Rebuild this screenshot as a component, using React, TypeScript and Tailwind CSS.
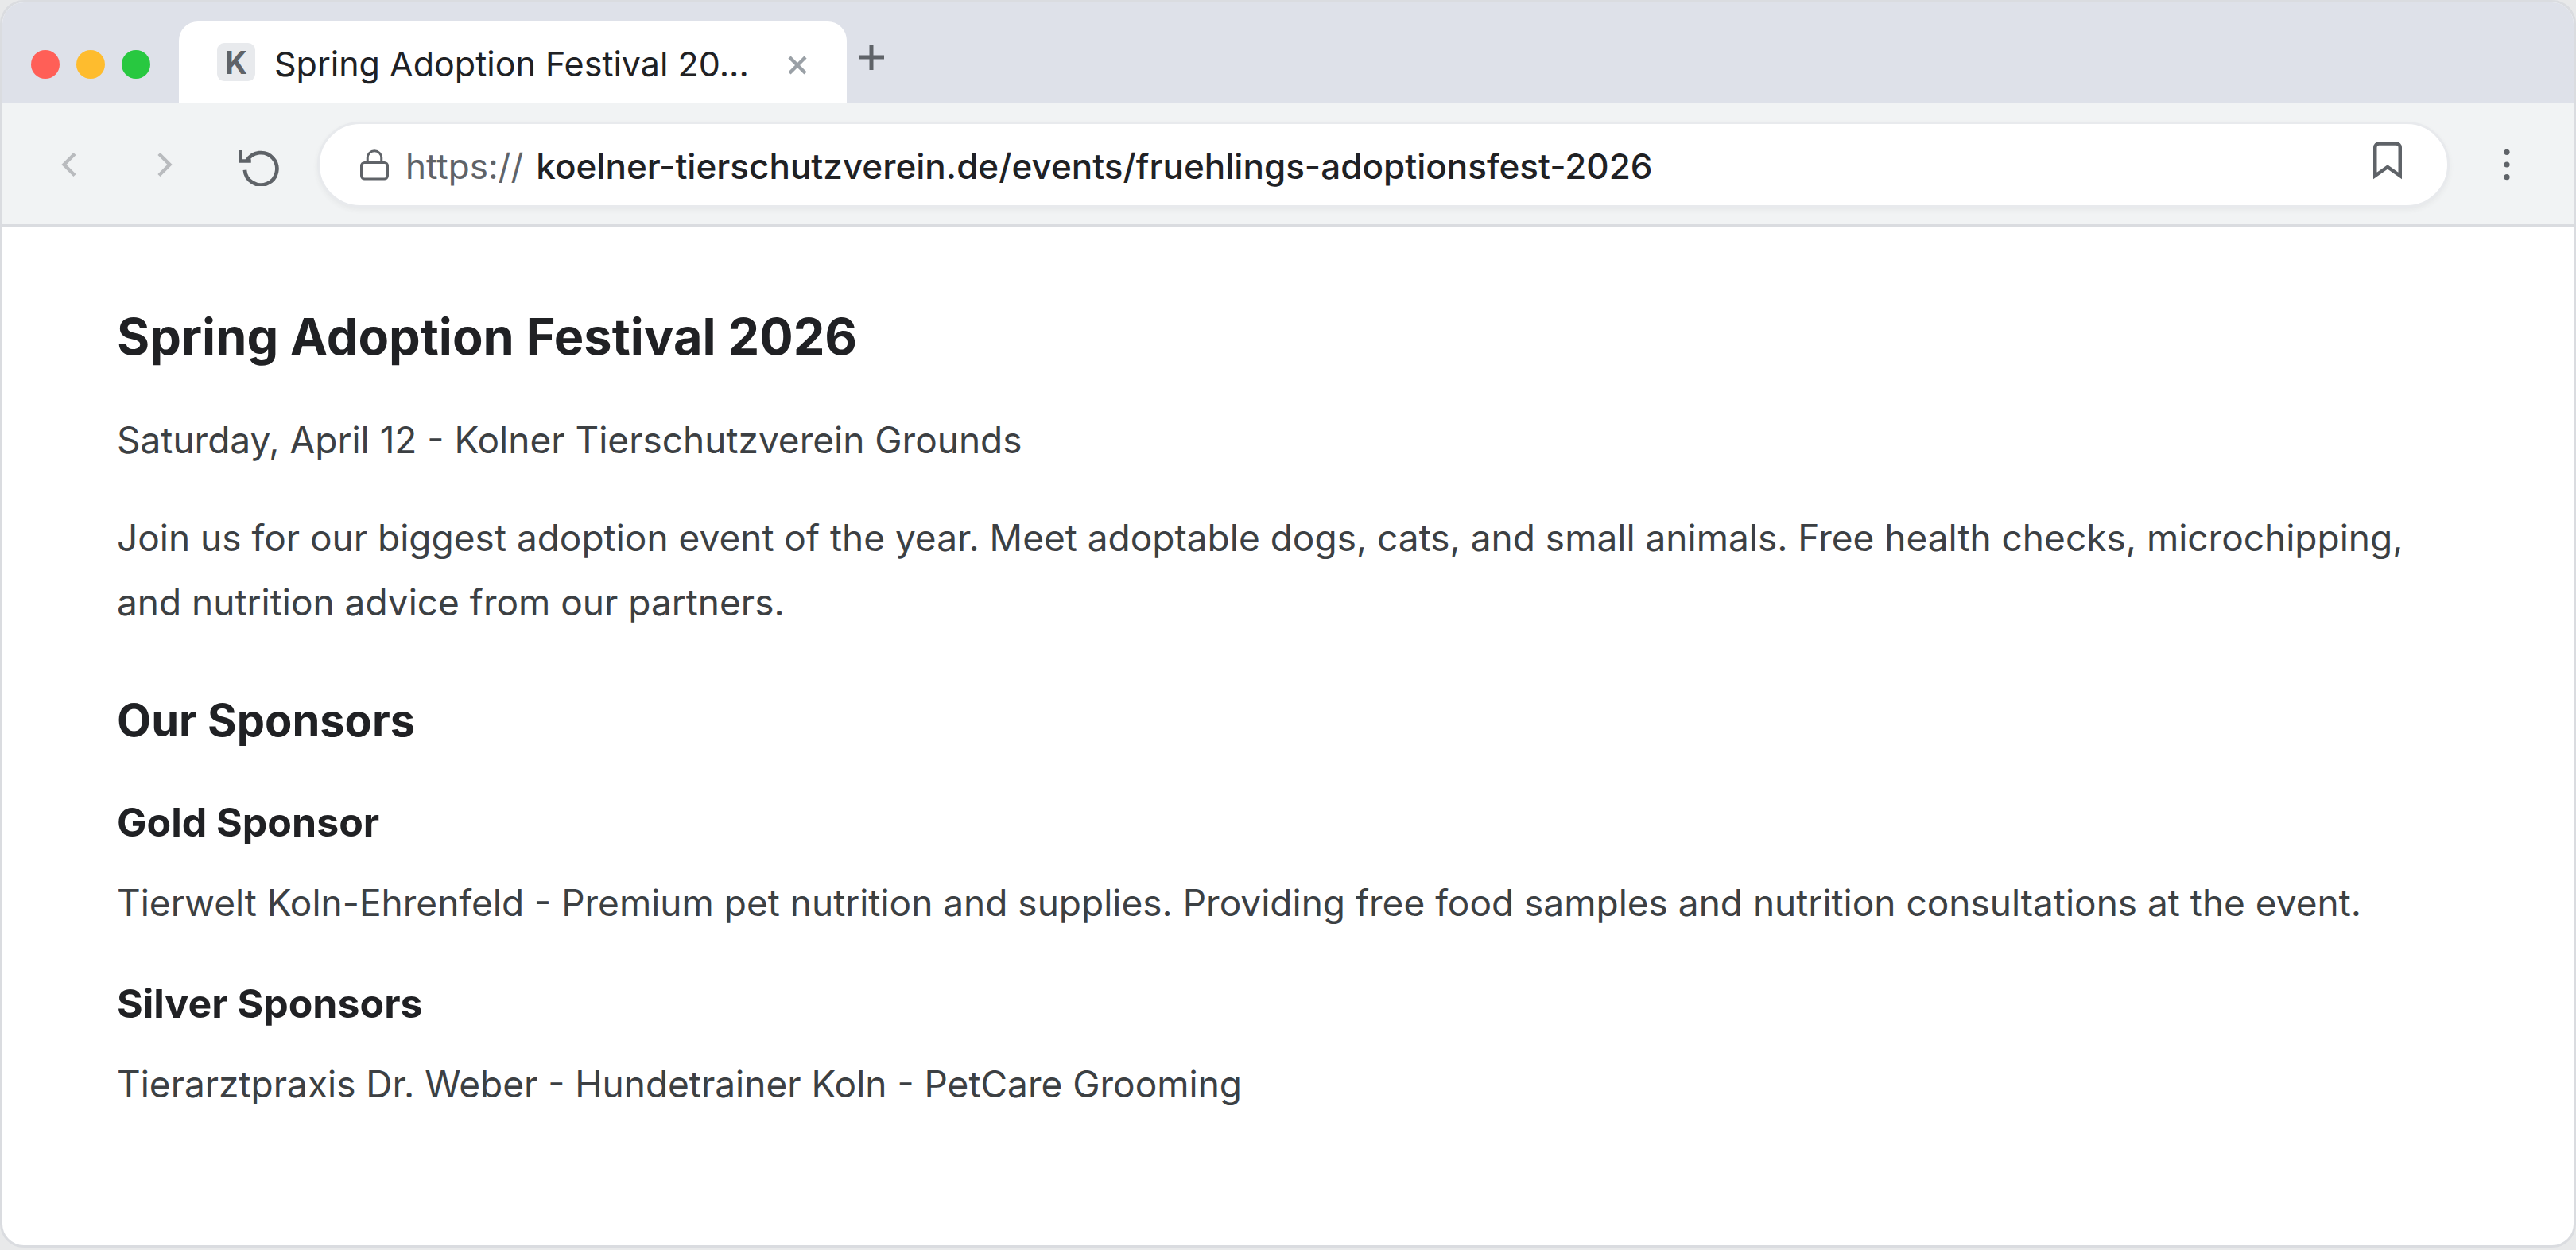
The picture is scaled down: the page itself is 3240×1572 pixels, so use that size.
import type { ReactNode } from "react";

function NavButton({ label, disabled = false, children }: { label: string; disabled?: boolean; children: ReactNode }) {
  return (
    <button
      type="button"
      aria-label={label}
      disabled={disabled}
      className="flex size-24 shrink-0 items-center justify-center rounded-full text-[#5f6368] disabled:text-[#b9bbbe]"
    >
      {children}
    </button>
  );
}

function BackIcon() {
  return (
    <svg className="size-12" viewBox="0 0 48 48" fill="none" stroke="currentColor" strokeWidth="4.5">
      <path d="M31 10.500 17.500 24 31 37.500" />
    </svg>
  );
}

function ForwardIcon() {
  return (
    <svg className="size-12" viewBox="0 0 48 48" fill="none" stroke="currentColor" strokeWidth="4.5">
      <path d="M17 10.500 30.500 24 17 37.500" />
    </svg>
  );
}

function ReloadIcon() {
  return (
    <svg className="size-[54px]" viewBox="0 0 24 24" fill="none" stroke="currentColor" strokeWidth="2.1">
      <path d="M3.510 15a9 9 0 1 0 1.100-5" />
      <path d="M1 4v6h6" />
    </svg>
  );
}

function LockIcon() {
  return (
    <svg className="h-10 w-9 shrink-0 text-[#5f6368]" viewBox="0 0 36 40" fill="none" stroke="currentColor" strokeWidth="3">
      <rect x="1.500" y="17.500" width="33" height="20.500" rx="4" />
      <path d="M9.250 17.500v-6a8.750 8.750 0 0 1 17.500 0v6" />
    </svg>
  );
}

function BookmarkIcon() {
  return (
    <svg className="h-12 w-9" viewBox="0 0 36 48" fill="none" stroke="currentColor" strokeWidth="4.500">
      <path d="M2.250 43V7.500a5 5 0 0 1 5-5h21.500a5 5 0 0 1 5 5V43L18 32z" />
    </svg>
  );
}

function MenuIcon() {
  return (
    <svg className="size-12" viewBox="0 0 48 48" fill="currentColor">
      <circle cx="24" cy="8.300" r="3.600" />
      <circle cx="24" cy="24" r="3.600" />
      <circle cx="24" cy="39.700" r="3.600" />
    </svg>
  );
}

function TabStrip() {
  return (
    <div className="flex items-end bg-[#dee1e9] pt-6 pl-9">
      <div className="flex h-[102px] items-center gap-[21px] pt-1.5 pr-9">
        <button type="button" aria-label="Close window" className="size-9 rounded-full bg-[#ff5f57]" />
        <button type="button" aria-label="Minimize window" className="size-9 rounded-full bg-[#febc2e]" />
        <button type="button" aria-label="Zoom window" className="size-9 rounded-full bg-[#28c840]" />
      </div>
      <div className="flex h-[102px] w-[840px] items-center rounded-t-3xl bg-white pr-[50px] pl-12">
        <span className="flex size-12 shrink-0 items-center justify-center rounded-[9px] bg-[#e8eaed] text-[39px] leading-none font-bold text-[#5f6368]">
          K
        </span>
        <span className="ml-6 min-w-0 flex-1 truncate pt-1 text-[43px] leading-[60px] text-[#202124]">
          Spring Adoption Festival 20...
        </span>
        <button type="button" aria-label="Close tab" className="flex shrink-0 items-center pt-2 text-[#9aa0a6]">
          <svg className="size-6" viewBox="0 0 24 24" fill="none" stroke="currentColor" strokeWidth="4.500">
            <path d="m2 2 20 20m0-20L2 22" />
          </svg>
        </button>
      </div>
      <button type="button" aria-label="New tab" className="flex h-[102px] w-[62px] items-center justify-center pb-3 text-[#5f6368]">
        <svg className="size-8" viewBox="0 0 32 32" fill="none" stroke="currentColor" strokeWidth="5">
          <path d="M16 0v32M0 16h32" />
        </svg>
      </button>
    </div>
  );
}

function Toolbar() {
  return (
    <div className="flex items-center gap-6 border-b-3 border-[#dadce0] bg-[#f1f3f4] px-9 pt-6 pb-[21px]">
      <NavButton label="Back" disabled>
        <BackIcon />
      </NavButton>
      <NavButton label="Forward" disabled>
        <ForwardIcon />
      </NavButton>
      <NavButton label="Reload">
        <ReloadIcon />
      </NavButton>
      <div className="flex h-[108px] min-w-0 flex-1 items-center rounded-full border-3 border-[#e8eaed] bg-white pr-12 pl-[51px] text-[44px] leading-[60px] shadow-[0_3px_6px_rgba(60,64,67,0.06)]">
        <LockIcon />
        <label htmlFor="address" className="ml-[21px] shrink-0 pt-1 text-[#5f6368]">
          https://
        </label>
        <input
          id="address"
          type="text"
          defaultValue="koelner-tierschutzverein.de/events/fruehlings-adoptionsfest-2026"
          className="ml-4 min-w-0 flex-1 bg-transparent pt-1 font-medium text-[#202124] outline-none"
        />
        <button type="button" aria-label="Bookmark this page" className="mr-[9px] flex shrink-0 items-center pb-2.5 text-[#5f6368]">
          <BookmarkIcon />
        </button>
      </div>
      <NavButton label="Menu">
        <MenuIcon />
      </NavButton>
    </div>
  );
}

export default function App() {
  return (
    <div className="flex min-h-screen flex-col bg-[#e8e9ea] pb-[3px] font-['Inter',sans-serif]">
      <div className="flex flex-1 flex-col overflow-hidden rounded-[30px] border-3 border-[#dadce0] bg-white">
        <TabStrip />
        <Toolbar />
        <main className="px-36 pt-24 pb-24 text-[46px] leading-[81px] text-[#3c4043]">
          <h1 className="text-[63px] leading-[84px] font-bold text-[#202124]">Spring Adoption Festival 2026</h1>
          <p className="mt-12">Saturday, April 12 - Kolner Tierschutzverein Grounds</p>
          <p className="mt-[42px]">
            Join us for our biggest adoption event of the year. Meet adoptable dogs, cats, and small animals. Free health
            checks, microchipping, and nutrition advice from our partners.
          </p>
          <h2 className="mt-[66px] text-[56px] leading-[84px] font-bold text-[#202124]">Our Sponsors</h2>
          <h3 className="mt-[46px] text-[50px] font-bold text-[#202124]">Gold Sponsor</h3>
          <p className="mt-5">
            Tierwelt Koln-Ehrenfeld - Premium pet nutrition and supplies. Providing free food samples and nutrition
            consultations at the event.
          </p>
          <h3 className="mt-[46px] text-[50px] font-bold text-[#202124]">Silver Sponsors</h3>
          <p className="mt-5">Tierarztpraxis Dr. Weber - Hundetrainer Koln - PetCare Grooming</p>
        </main>
      </div>
    </div>
  );
}
